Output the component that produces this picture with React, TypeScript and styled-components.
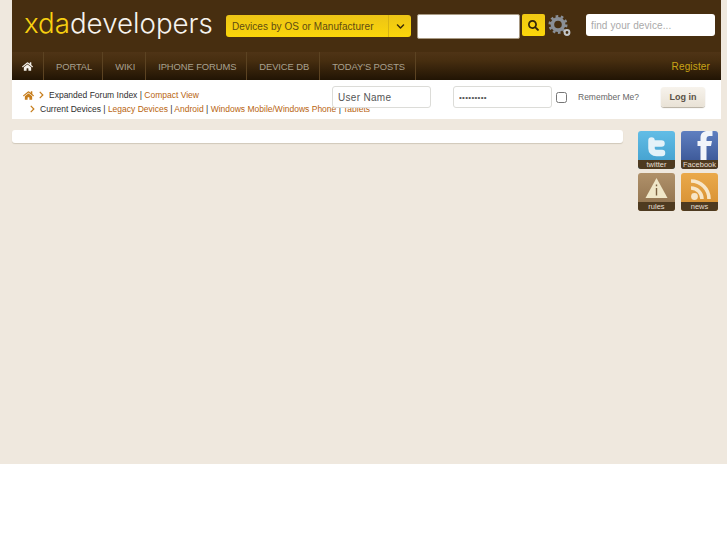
import styled, { createGlobalStyle } from 'styled-components';
import { FaHome, FaChevronRight, FaChevronDown, FaSearch } from 'react-icons/fa';

const GlobalStyle = createGlobalStyle`
  html, body {
    margin: 0;
    padding: 0;
    background: #fff;
  }
  body {
    font-family: "Liberation Sans", Arial, sans-serif;
    overflow: hidden;
  }
`;

const navItems = ['PORTAL', 'WIKI', 'IPHONE FORUMS', 'DEVICE DB', "TODAY'S POSTS"];

const Page = () => {
  return (
    <Wrapper>
      <GlobalStyle />
      <Header>
        <TopBar>
          <Logo>
            <span>xda</span>developers
          </Logo>
          <DeviceSelect>
            <span>Devices by OS or Manufacturer</span>
            <SelectArrow>
              <FaChevronDown />
            </SelectArrow>
          </DeviceSelect>
          <SearchInput />
          <SearchButton>
            <FaSearch />
          </SearchButton>
          <Gears viewBox='0 0 24 24'>
            <circle cx='10' cy='10.5' r='5.6' fill='none' stroke='#8a8f96' strokeWidth='3.6' />
            <circle cx='10' cy='10.5' r='8.2' fill='none' stroke='#8a8f96' strokeWidth='2.6' strokeDasharray='2.6 2.55' />
            <circle cx='19' cy='18.5' r='2.4' fill='none' stroke='#c4c6c8' strokeWidth='2' />
          </Gears>
          <DeviceFinder placeholder='find your device...' />
        </TopBar>
        <Nav>
          <HomeTab>
            <FaHome />
          </HomeTab>
          {navItems.map((item) => (
            <NavTab key={item}>{item}</NavTab>
          ))}
          <Register>Register</Register>
        </Nav>
      </Header>
      <Crumbs>
        <CrumbRow>
          <HomeIcon />
          <Chevron />
          <span>
            Expanded Forum Index | <CrumbLink>Compact View</CrumbLink>
          </span>
        </CrumbRow>
        <SubRow>
          <Chevron />
          <span>
            Current Devices | <CrumbLink>Legacy Devices</CrumbLink> | <CrumbLink>Android</CrumbLink> |{' '}
            <CrumbLink>Windows Mobile/Windows Phone</CrumbLink> | <CrumbLink>Tablets</CrumbLink>
          </span>
        </SubRow>
        <LoginForm>
          <UserField defaultValue='User Name' />
          <PassField type='password' defaultValue='password1' />
          <RememberBox type='checkbox' />
          <RememberLabel>Remember Me?</RememberLabel>
          <LoginButton>Log in</LoginButton>
        </LoginForm>
      </Crumbs>
      <Content>
        <MainPanel />
        <SocialGrid>
          <SocialTile $top='#62bde6' $bottom='#3f9ccb'>
            <TileArt viewBox='0 0 37 29'>
              <path d='M13.5 9.5v8c0 3 2 4.5 5 4.5h5.500M13.500 12.500h10' fill='none' stroke='#e4f2f9' strokeWidth='6.500' strokeLinecap='round' />
            </TileArt>
            <TileLabel>twitter</TileLabel>
          </SocialTile>
          <SocialTile $top='#5f7fc0' $bottom='#35508f'>
            <TileArt viewBox='0 0 37 29'>
              <path d='M19.500 29V15h-3v-5h3V7c0-5 3-7 7-7h5v5h-3c-2 0-3 1-3 3v2h5.500l-1 5h-4.500v14z' fill='#f2f5fa' />
            </TileArt>
            <TileLabel>Facebook</TileLabel>
          </SocialTile>
          <SocialTile $top='#b0916a' $bottom='#8d6f4b'>
            <TileArt viewBox='0 0 37 29'>
              <path d='M18.500 5 29.500 25H7.500z' fill='#f0e7c8' />
              <path d='M17.800 11.500h1.400v1.800h-1.400zM17.800 15h1.400v7.500h-1.400z' fill='#7a6040' />
            </TileArt>
            <TileLabel>rules</TileLabel>
          </SocialTile>
          <SocialTile $top='#eaa94a' $bottom='#d58e30'>
            <TileArt viewBox='0 0 37 29'>
              <circle cx='13.500' cy='23.500' r='3.400' fill='#f7e6c8' />
              <path d='M10 15a11 11 0 0 1 11 11M10 8a18 18 0 0 1 18 18' fill='none' stroke='#f7e6c8' strokeWidth='3.600' />
            </TileArt>
            <TileLabel>news</TileLabel>
          </SocialTile>
        </SocialGrid>
      </Content>
    </Wrapper>
  );
};

const Wrapper = styled.div`
  height: 464px;
  background: #efe8de;
  padding: 0 6px 0 12px;
  box-sizing: border-box;
  width: 727px;
`;

const Header = styled.div`
  background: #472e10;
`;

const TopBar = styled.div`
  height: 52px;
  display: flex;
  align-items: flex-start;
  box-sizing: border-box;
  padding-top: 14px;
`;

const Logo = styled.div`
  width: 214px;
  flex: none;
  margin-top: -9px;
  padding-left: 12px;
  box-sizing: border-box;
  font-family: Inter, sans-serif;
  font-weight: 300;
  font-size: 27.7px;
  line-height: 36px;
  color: #f6f3ee;
  white-space: nowrap;
  span {
    color: #f8d010;
  }
`;

const DeviceSelect = styled.div`
  width: 185px;
  height: 22px;
  flex: none;
  margin-top: 1px;
  display: flex;
  align-items: center;
  justify-content: space-between;
  box-sizing: border-box;
  padding-left: 6px;
  border-radius: 3px;
  background: linear-gradient(#ecc416, #fbd60a);
  color: #5f4a12;
  font-size: 10px;
  letter-spacing: 0.07px;
  white-space: nowrap;
`;

const SelectArrow = styled.div`
  width: 22px;
  height: 22px;
  flex: none;
  display: flex;
  align-items: center;
  justify-content: center;
  border-left: 1px solid #d7b312;
  color: #3a2a08;
  font-size: 9px;
`;

const SearchInput = styled.input`
  width: 103px;
  height: 25px;
  margin-left: 6px;
  padding: 0;
  box-sizing: border-box;
  border: 1px solid #a89a84;
  border-radius: 2px;
  background: #fff;
`;

const SearchButton = styled.div`
  width: 23px;
  height: 22px;
  margin-left: 2px;
  display: flex;
  align-items: center;
  justify-content: center;
  border-radius: 2px;
  background: linear-gradient(#f0c814, #fbd60a);
  color: #33250a;
  font-size: 11px;
`;

const Gears = styled.svg`
  width: 24px;
  height: 24px;
  margin-left: 3px;
`;

const DeviceFinder = styled.input`
  width: 129px;
  height: 22px;
  margin-left: 14px;
  padding: 0 5px;
  box-sizing: border-box;
  border: 0;
  border-radius: 3px;
  background: #fff;
  font-family: "Liberation Sans", Arial, sans-serif;
  font-size: 10px;
  letter-spacing: 0.1px;
  &::placeholder {
    color: #a9a9a9;
    opacity: 1;
  }
`;

const Nav = styled.div`
  height: 28px;
  display: flex;
  align-items: stretch;
  background: linear-gradient(#4f3416 0%, #472e10 30%, #211404 100%);
`;

const NavTab = styled.div`
  display: flex;
  align-items: center;
  padding: 0 10px 0 12px;
  border-right: 1px solid #5c4322;
  color: #a9a18f;
  font-size: 9.4px;
  letter-spacing: -0.08px;
  white-space: nowrap;
`;

const HomeTab = styled(NavTab)`
  width: 32px;
  padding: 0;
  justify-content: center;
  box-sizing: border-box;
  color: #f5f1ea;
  font-size: 11px;
`;

const Register = styled.div`
  margin-left: auto;
  padding-right: 11px;
  display: flex;
  align-items: center;
  color: #c9a416;
  font-size: 10px;
  letter-spacing: 0.15px;
`;

const Crumbs = styled.div`
  position: relative;
  height: 39px;
  box-sizing: border-box;
  padding: 8px 0 0 11px;
  background: #fff;
  color: #2e2e2e;
  font-size: 8.5px;
`;

const CrumbRow = styled.div`
  height: 14px;
  display: flex;
  align-items: center;
  white-space: nowrap;
`;

const SubRow = styled(CrumbRow)`
  margin-left: 6px;
`;

const HomeIcon = styled(FaHome)`
  width: 11px;
  height: 11px;
  margin-right: 4px;
  color: #c67c1a;
`;

const Chevron = styled(FaChevronRight)`
  width: 7px;
  height: 8px;
  margin-right: 4px;
  color: #c67c1a;
`;

const CrumbLink = styled.span`
  color: #b8640f;
`;

const LoginForm = styled.div`
  position: absolute;
  top: 6px;
  left: 320px;
  display: flex;
  align-items: center;
`;

const UserField = styled.input`
  width: 99px;
  height: 22px;
  padding: 0 5px;
  box-sizing: border-box;
  border: 1px solid #dcdcd8;
  border-radius: 3px;
  background: #fff;
  color: #555;
  font-family: "Liberation Sans", Arial, sans-serif;
  font-size: 10px;
  letter-spacing: 0.3px;
`;

const PassField = styled(UserField)`
  margin-left: 22px;
  font-size: 8px;
`;

const RememberBox = styled.input`
  width: 11px;
  height: 11px;
  margin: 0 0 0 4px;
`;

const RememberLabel = styled.span`
  margin-left: 11px;
  color: #666;
  font-size: 8.5px;
  white-space: nowrap;
`;

const LoginButton = styled.div`
  width: 44px;
  height: 20px;
  margin-left: 22px;
  display: flex;
  align-items: center;
  justify-content: center;
  border-radius: 3px;
  background: linear-gradient(#f7f3ec, #e9e2d6);
  box-shadow: 0 1px 1px #b5ad9f;
  color: #5a5146;
  font-size: 9px;
  font-weight: bold;
`;

const Content = styled.div`
  display: flex;
  align-items: flex-start;
  padding-top: 11px;
`;

const MainPanel = styled.div`
  width: 611px;
  height: 13px;
  border-radius: 3px;
  background: #fff;
  box-shadow: 0 1px 1px #d0c8ba;
`;

const SocialGrid = styled.div`
  display: grid;
  grid-template-columns: 37px 37px;
  grid-auto-rows: 38px;
  gap: 4px 6px;
  margin: 1px 0 0 15px;
`;

const SocialTile = styled.div<{ $top: string; $bottom: string }>`
  display: flex;
  flex-direction: column;
  overflow: hidden;
  border-radius: 3px;
  background: linear-gradient(${(p) => p.$top}, ${(p) => p.$bottom});
`;

const TileArt = styled.svg`
  width: 37px;
  height: 29px;
  flex: none;
`;

const TileLabel = styled.div`
  height: 9px;
  background: #4e3a20;
  color: #e6dfd2;
  font-size: 7.5px;
  line-height: 9px;
  text-align: center;
`;

export default Page;
